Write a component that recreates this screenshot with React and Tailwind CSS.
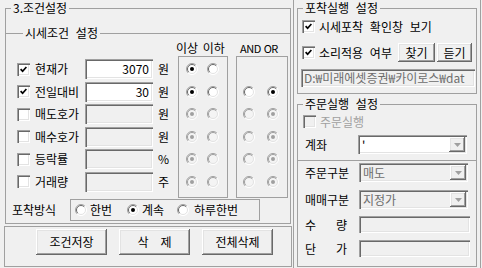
const sunken =
  "shadow-[inset_1px_1px_0_#a0a0a0,inset_2px_2px_0_#696969,inset_-1px_-1px_0_#ffffff,inset_-2px_-2px_0_#e3e3e3]";
const raised =
  "shadow-[inset_-1px_-1px_0_#696969,inset_1px_1px_0_#ffffff,inset_-2px_-2px_0_#a0a0a0,inset_2px_2px_0_#e3e3e3]";

const rows = [
  { label: "현재가", checked: true, value: "3070", unit: "원", h: "h-[22px]", lo: [1, 0, 0], ao: null },
  { label: "전일대비", checked: true, value: "30", unit: "원", h: "h-[23px]", lo: [1, 0, 0], ao: [0, 1, 0] },
  { label: "매도호가", checked: false, value: "", unit: "원", h: "h-[22px]", lo: [1, 0, 1], ao: [0, 1, 1] },
  { label: "매수호가", checked: false, value: "", unit: "원", h: "h-[23px]", lo: [1, 0, 1], ao: [0, 1, 1] },
  { label: "등락률", checked: false, value: "", unit: "%", h: "h-[22px]", lo: [1, 0, 1], ao: [0, 1, 1] },
  { label: "거래량", checked: false, value: "", unit: "주", h: "h-[23px]", lo: [1, 0, 1], ao: [0, 1, 1] },
];

function Check({ checked, disabled }) {
  return (
    <span
      className={`flex h-[13px] w-[13px] shrink-0 items-center justify-center ${sunken} ${
        disabled ? "bg-[#f0f0f0]" : "bg-white"
      }`}
    >
      {checked && (
        <svg width="7" height="7" viewBox="0 0 7 7">
          <path d="M0.6 3.2 L2.6 5.2 L6.4 1" fill="none" stroke="#000" strokeWidth="1.7" />
        </svg>
      )}
    </span>
  );
}

function Radio({ checked, disabled }) {
  return (
    <svg width="12" height="12" viewBox="0 0 12 12" className="shrink-0">
      <circle cx="6" cy="6" r="5.5" fill={disabled ? "#f4f4f4" : "#fff"} />
      <path d="M2.1 9.9 A5.5 5.5 0 0 1 9.9 2.1" fill="none" stroke="#a0a0a0" />
      <path d="M9.9 2.1 A5.5 5.5 0 0 1 2.1 9.9" fill="none" stroke="#ffffff" />
      <path d="M2.8 9.2 A4.5 4.5 0 0 1 9.2 2.8" fill="none" stroke={disabled ? "#a0a0a0" : "#696969"} />
      <path d="M9.2 2.8 A4.5 4.5 0 0 1 2.8 9.2" fill="none" stroke="#e3e3e3" />
      {checked && <circle cx="6" cy="6" r="2" fill={disabled ? "#a0a0a0" : "#000"} />}
    </svg>
  );
}

function Title({ children, className }) {
  return (
    <span className={`absolute top-[-7px] whitespace-nowrap bg-[#f0f0f0] px-[2px] leading-[12px] ${className}`}>
      {children}
    </span>
  );
}

function Combo({ value, disabled, className }) {
  return (
    <div
      className={`flex h-[19px] items-stretch p-[2px] ${sunken} ${
        disabled ? "bg-[#f0f0f0]" : "bg-white"
      } ${className}`}
    >
      <span className={`flex-1 pl-[2px] leading-[15px] ${disabled ? "text-[#6d6d6d]" : ""}`}>
        {value}
      </span>
      <span className={`flex w-[16px] items-center justify-center bg-[#f0f0f0] ${raised}`}>
        <svg width="7" height="4" viewBox="0 0 7 4">
          <path d="M0 0 H7 L3.5 4 Z" fill="#a0a0a0" />
        </svg>
      </span>
    </div>
  );
}

function Button({ children, className }) {
  return (
    <div className={`flex items-center justify-center bg-[#f0f0f0] ${raised} ${className}`}>
      {children}
    </div>
  );
}

export default function App() {
  return (
    <div className="flex h-[268px] w-[482px] overflow-hidden bg-[#f0f0f0] font-['Noto_Sans_CJK_KR','Noto_Sans',sans-serif] text-[12px] leading-[12px] text-black [word-spacing:4px]">
      {/* left: 조건설정 */}
      <div className="ml-[4px] flex w-[288px] flex-col">
        <div className="relative ml-[1px] mt-[8px] h-[216px] w-[286px] border border-[#a0a0a0]">
          <Title className="left-[5px]">3.조건설정</Title>

          <div className="relative mt-[24px] border-t border-[#a0a0a0]">
            <Title className="left-[17px]">시세조건 설정</Title>

            <div className="flex h-[22px] items-center whitespace-nowrap pt-[5px]">
              <span className="ml-[170px] w-[64px] [word-spacing:2px]">이상 이하</span>
              <span className="text-[11px] tracking-[-0.5px] [word-spacing:1px]">AND OR</span>
            </div>

            <div className="flex">
              <div className="w-[172px] pt-[2px]">
                {rows.map((r) => (
                  <div key={r.label} className={`flex items-center ${r.h}`}>
                    <span className="ml-[11px]">
                      <Check checked={r.checked} />
                    </span>
                    <span className="ml-[5px] w-[50px] whitespace-nowrap">{r.label}</span>
                    <span
                      className={`h-[20px] w-[68px] pr-[4px] text-right leading-[20px] ${sunken} ${
                        r.checked ? "bg-white" : "bg-[#f0f0f0]"
                      }`}
                    >
                      {r.value}
                    </span>
                    <span className="ml-[5px]">{r.unit}</span>
                  </div>
                ))}
              </div>

              <div className="h-[142px] w-[50px] border border-[#a0a0a0] pt-[1px]">
                {rows.map((r) => (
                  <div key={r.label} className={`flex items-center gap-[9px] pl-[7px] ${r.h}`}>
                    <Radio checked={r.lo[0]} disabled={r.lo[2]} />
                    <Radio checked={r.lo[1]} disabled={r.lo[2]} />
                  </div>
                ))}
              </div>

              <div className="ml-[8px] h-[142px] w-[52px] border border-[#a0a0a0] pt-[1px]">
                {rows.map((r) => (
                  <div key={r.label} className={`flex items-center gap-[12px] pl-[6px] ${r.h}`}>
                    {r.ao && (
                      <>
                        <Radio checked={r.ao[0]} disabled={r.ao[2]} />
                        <Radio checked={r.ao[1]} disabled={r.ao[2]} />
                      </>
                    )}
                  </div>
                ))}
              </div>
            </div>

            <div className="mt-[1px] flex h-[22px] items-center">
              <span className="ml-[6px] w-[58px]">포착방식</span>
              <div className="flex h-[22px] w-[190px] items-center border border-[#a0a0a0] pl-[4px]">
                <div className="flex w-[52px] items-center gap-[3px]">
                  <Radio />
                  <span>한번</span>
                </div>
                <div className="flex w-[50px] items-center gap-[3px]">
                  <Radio checked />
                  <span>계속</span>
                </div>
                <div className="flex items-center gap-[5px]">
                  <Radio />
                  <span>하루한번</span>
                </div>
              </div>
            </div>
          </div>
        </div>

        <div className="mt-[2px] flex h-[41px] w-[288px] gap-[12px] border border-[#a0a0a0] pl-[31px] pt-[2px]">
          <Button className="h-[26px] w-[71px]">조건저장</Button>
          <Button className="h-[26px] w-[71px] gap-[12px]">
            <span>삭</span>
            <span>제</span>
          </Button>
          <Button className="h-[26px] w-[71px]">전체삭제</Button>
        </div>
      </div>

      {/* right: 포착/주문 실행 */}
      <div className="ml-[1px] h-full w-[188px] border-x border-[#a0a0a0]">
        <div className="relative ml-[3px] mt-[8px] h-[86px] w-[180px] border border-[#a0a0a0]">
          <Title className="left-[5px]">포착실행 설정</Title>
          <div className="ml-[4px] mt-[11px] flex h-[13px] items-center gap-[4px]">
            <Check checked />
            <span className="whitespace-nowrap">시세포착 확인창 보기</span>
          </div>
          <div className="ml-[4px] mt-[10px] flex h-[19px] items-center">
            <div className="flex w-[96px] items-center gap-[4px]">
              <Check checked />
              <span className="whitespace-nowrap">소리적용 여부</span>
            </div>
            <Button className="h-[19px] w-[37px]">찾기</Button>
            <Button className="ml-[2px] h-[19px] w-[35px]">듣기</Button>
          </div>
          <div
            className={`ml-[3px] mt-[7px] h-[18px] w-[174px] overflow-hidden whitespace-nowrap bg-[#f0f0f0] pl-[3px] leading-[18px] text-[#6d6d6d] ${sunken}`}
          >
            D:₩미래에셋증권₩카이로스₩dat
          </div>
        </div>

        <div className="relative ml-[3px] mt-[10px] h-[56px] w-[180px] border-x border-t border-[#a0a0a0]">
          <Title className="left-[5px]">주문실행 설정</Title>
          <div className="ml-[5px] mt-[10px] flex h-[13px] items-center gap-[4px]">
            <Check disabled />
            <span className="text-[#a0a0a0]">주문실행</span>
          </div>
          <div className="mt-[7px] flex items-center">
            <span className="ml-[7px] w-[53px]">계좌</span>
            <Combo value="'" className="w-[109px]" />
          </div>
        </div>

        <div className="ml-[3px] h-[107px] w-[180px] border border-[#a0a0a0] pt-[2px]">
          <div className="flex items-center">
            <span className="ml-[7px] w-[54px]">주문구분</span>
            <Combo value="매도" disabled className="w-[109px]" />
          </div>
          <div className="mt-[8px] flex items-center">
            <span className="ml-[7px] w-[54px]">매매구분</span>
            <Combo value="지정가" disabled className="w-[109px]" />
          </div>
          <div className="mt-[7px] flex items-center">
            <span className="ml-[7px] flex w-[42px] justify-between">
              <span>수</span>
              <span>량</span>
            </span>
            <span className={`ml-[12px] h-[17px] w-[111px] bg-[#f0f0f0] ${sunken}`} />
          </div>
          <div className="mt-[7px] flex items-center">
            <span className="ml-[7px] flex w-[42px] justify-between">
              <span>단</span>
              <span>가</span>
            </span>
            <span className={`ml-[12px] h-[17px] w-[111px] bg-[#f0f0f0] ${sunken}`} />
          </div>
        </div>
      </div>
    </div>
  );
}
